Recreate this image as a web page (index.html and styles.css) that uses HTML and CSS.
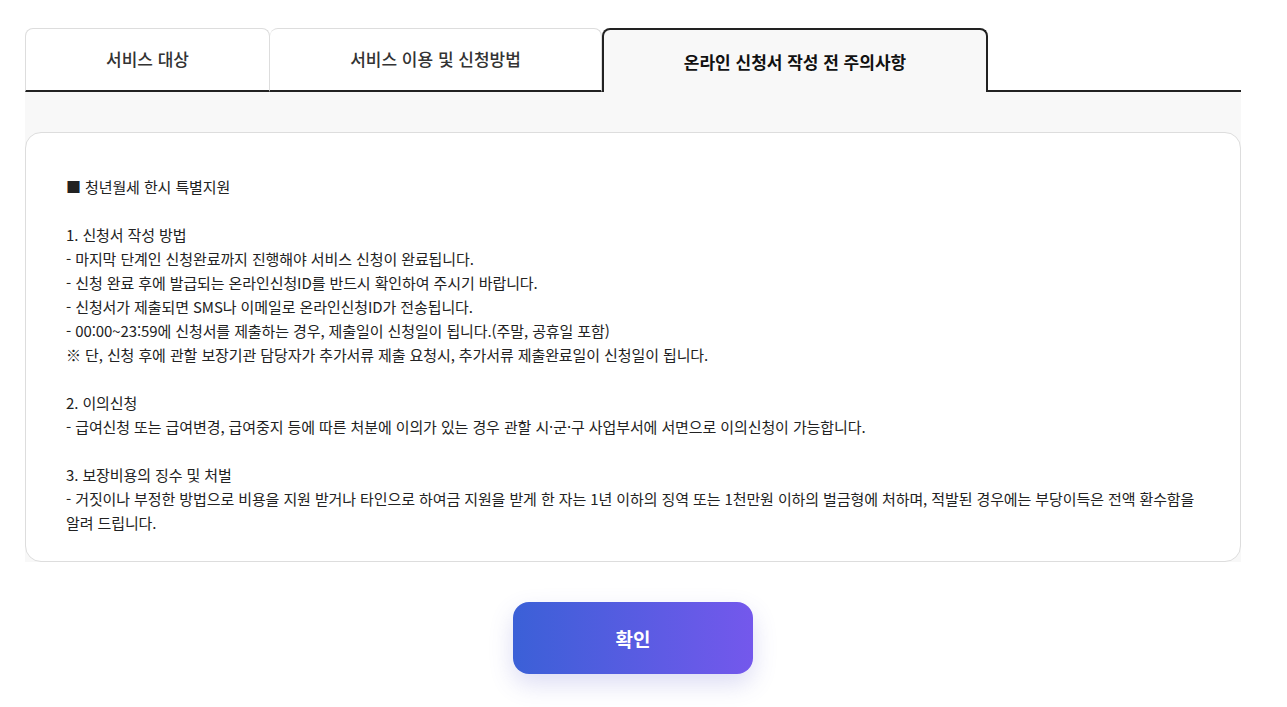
FILE: index.html
```html
<!DOCTYPE html>
<html lang="ko">
<head>
<meta charset="utf-8">
<title>온라인 신청서 작성 전 주의사항</title>
<link rel="stylesheet" href="styles.css">
</head>
<body>
  <div class="wrap">
    <ul class="tabs">
      <li class="tab t1">서비스 대상</li>
      <li class="tab t2">서비스 이용 및 신청방법</li>
      <li class="tab t3 on">온라인 신청서 작성 전 주의사항</li>
      <li class="tab-rest"></li>
    </ul>
    <div class="panel">
      <div class="card">
        <p>■ 청년월세 한시 특별지원</p>
        <p class="gap">1. 신청서 작성 방법</p>
        <p>- 마지막 단계인 신청완료까지 진행해야 서비스 신청이 완료됩니다.</p>
        <p>- 신청 완료 후에 발급되는 온라인신청ID를 반드시 확인하여 주시기 바랍니다.</p>
        <p>- 신청서가 제출되면 SMS나 이메일로 온라인신청ID가 전송됩니다.</p>
        <p>- 00:00~23:59에 신청서를 제출하는 경우, 제출일이 신청일이 됩니다.(주말, 공휴일 포함)</p>
        <p>※ 단, 신청 후에 관할 보장기관 담당자가 추가서류 제출 요청시, 추가서류 제출완료일이 신청일이 됩니다.</p>
        <p class="gap">2. 이의신청</p>
        <p>- 급여신청 또는 급여변경, 급여중지 등에 따른 처분에 이의가 있는 경우 관할 시·군·구 사업부서에 서면으로 이의신청이 가능합니다.</p>
        <p class="gap">3. 보장비용의 징수 및 처벌</p>
        <p>- 거짓이나 부정한 방법으로 비용을 지원 받거나 타인으로 하여금 지원을 받게 한 자는 1년 이하의 징역 또는 1천만원 이하의 벌금형에 처하며, 적발된 경우에는 부당이득은 전액 환수함을 알려 드립니다.</p>
      </div>
    </div>
    <div class="btns">
      <button class="ok">확인</button>
    </div>
  </div>
</body>
</html>
```

FILE: styles.css
```css
*{
  box-sizing: border-box;
}
body{
  margin: 0;
  background: #fff;
  font-family: "Noto Sans CJK KR", "Noto Sans", sans-serif;
  color: #222;
}
.wrap{
  width: 1216px;
  margin-left: 25px;
  padding-top: 28px;
  padding-bottom: 40px;
}
.tabs{
  display: flex;
  list-style: none;
  margin: 0;
  padding: 0;
  height: 64px;
}
.tab{
  display: flex;
  align-items: center;
  justify-content: center;
  font-size: 17px;
  font-weight: 500;
  color: #333;
  border: 1px solid #ddd;
  border-bottom: 2px solid #222;
  border-radius: 8px 8px 0 0;
  background: #fff;
  padding-bottom: 2px;
}
.t1{ width: 245px; }
.t2{ width: 332px; border-left: none; }
.t3{ width: 386px; }
.tab.on{
  border: 2px solid #222;
  border-bottom: none;
  background: #f8f8f8;
  color: #111;
  font-weight: 700;
  padding-bottom: 0;
}
.tab-rest{
  flex: 1;
  border-bottom: 2px solid #222;
}
.panel{
  background: #f8f8f8;
  padding-top: 40px;
}
.card{
  background: #fff;
  border: 1px solid #ddd;
  border-radius: 16px;
  padding: 42px 40px 26px 40px;
  font-size: 15px;
  line-height: 24px;
  letter-spacing: -0.1px;
  color: #222;
}
.card p{
  margin: 0;
}
.card .gap{
  margin-top: 24px;
}
.btns{
  display: flex;
  justify-content: center;
  padding-top: 40px;
}
.ok{
  width: 240px;
  height: 72px;
  border: none;
  border-radius: 16px;
  background: linear-gradient(90deg, #3b60d7, #7458ec);
  color: #fff;
  font-family: "Noto Sans CJK KR", sans-serif;
  font-size: 19px;
  font-weight: 700;
  box-shadow: 0 10px 24px rgba(80, 80, 200, 0.2);
}
```
